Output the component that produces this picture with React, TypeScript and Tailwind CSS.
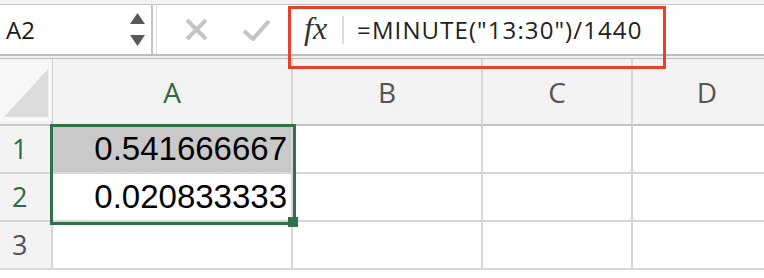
import React from 'react';

const cols = ['A', 'B', 'C', 'D'];
const rows = [
  { n: 1, a: '0.541666667' },
  { n: 2, a: '0.020833333' },
  { n: 3, a: '' },
];

const App = () => {
  return (
    <div className="relative w-[764px] h-[278px] overflow-hidden bg-white">
      {/* formula bar */}
      <div className="h-[5px] bg-[#f2f2f2] border-b border-[#c6c6c6]" />
      <div className="flex h-[49px] bg-white">
        <div className="w-[153px] flex items-center justify-between pl-[6px] pr-[6px] border-r-2 border-[#c4c4c4]">
          <span className="text-[24px] text-[#1a1a1a]" style={{ fontFamily: '"Open Sans", sans-serif' }}>A2</span>
          <div className="flex flex-col gap-[11px]">
            <svg width="15" height="11" viewBox="0 0 15 11"><path d="M7.5 0 L15 11 L0 11 Z" fill="#5a5a5a" /></svg>
            <svg width="15" height="11" viewBox="0 0 15 11"><path d="M0 0 L15 0 L7.5 11 Z" fill="#5a5a5a" /></svg>
          </div>
        </div>
        <div className="w-[3px]" />
        <div className="flex-1 flex items-center border-l border-[#e2e2e2]">
          <svg className="ml-[28px]" width="23" height="23" viewBox="0 0 23 23">
            <path d="M2 2 L21 21 M21 2 L2 21" stroke="#c4c4c4" strokeWidth="4" />
          </svg>
          <svg className="ml-[34px]" width="29" height="22" viewBox="0 0 29 22">
            <path d="M2 12 L11 20 L27 2" stroke="#c4c4c4" strokeWidth="4" fill="none" />
          </svg>
          <span className="ml-[33px] text-[32px] italic text-[#333] leading-none pb-[4px]" style={{ fontFamily: '"Liberation Serif", serif' }}>fx</span>
          <div className="ml-[15px] w-[2px] h-[28px] bg-[#dedede]" />
          <span className="ml-[13px] text-[24px] tracking-[1.1px] text-[#222]" style={{ fontFamily: '"Open Sans", sans-serif' }}>=MINUTE("13:30")/1440</span>
        </div>
      </div>
      <div className="h-[5px] bg-[#f2f2f2] border-t-2 border-b border-[#bdbdbd]" />

      {/* sheet */}
      <div className="relative grid grid-cols-[53px_240px_190px_150px_150px] grid-rows-[67px_48px_48px_48px]" style={{ fontFamily: '"Open Sans", sans-serif' }}>
        <div className="bg-[#f3f3f3] border-r-2 border-b-2 border-[#c9c9c9] flex">
          <div className="flex-1 mb-[3px] bg-[#f7f7f7] border-r border-[#d0d0d0] flex items-end justify-end p-[4px]">
            <svg width="44" height="48" viewBox="0 0 44 48"><path d="M44 0 L44 48 L0 48 Z" fill="#dcdcdc" /></svg>
          </div>
        </div>
        {cols.map((c) => (
          <div
            key={c}
            className={`bg-[#f3f3f3] border-r-2 border-b-2 border-[#d6d6d6] border-b-[#c4c4c4] flex items-center justify-center text-[28px] ${c === 'A' ? 'text-[#2f6b45]' : 'text-[#555555]'}`}
          >
            {c}
          </div>
        ))}
        {rows.map((r) => (
          <React.Fragment key={r.n}>
            <div className={`bg-[#f3f3f3] border-r-2 border-b-2 border-[#d6d6d6] flex items-center pl-[12px] text-[27px] ${r.n < 3 ? 'text-[#2f6b45]' : 'text-[#555555]'}`}>
              {r.n}
            </div>
            <div
              className={`border-r-2 border-b-2 border-[#d6d6d6] flex items-center justify-end pr-[4px] text-[33px] text-black ${r.n === 1 ? 'bg-[#c9c9c9]' : 'bg-white'}`}
              style={{ fontFamily: '"Liberation Sans", Arial, sans-serif' }}
            >
              {r.a}
            </div>
            <div className="border-r-2 border-b-2 border-[#d6d6d6]" />
            <div className="border-r-2 border-b-2 border-[#d6d6d6]" />
            <div className="border-b-2 border-[#d6d6d6]" />
          </React.Fragment>
        ))}
        {/* selection A1:A2 */}
        <div className="absolute left-[50px] top-[65px] w-[246px] h-[101px] border-[3px] border-[#31704a] pointer-events-none">
          <div className="absolute left-[235px] top-[90px] w-[10px] h-[10px] bg-[#31704a]" />
        </div>
      </div>

      {/* annotation */}
      <div className="absolute left-[288px] top-[6px] w-[378px] h-[63px] border-[3px] border-[#e5422c] pointer-events-none" />
    </div>
  );
};

export default App;
